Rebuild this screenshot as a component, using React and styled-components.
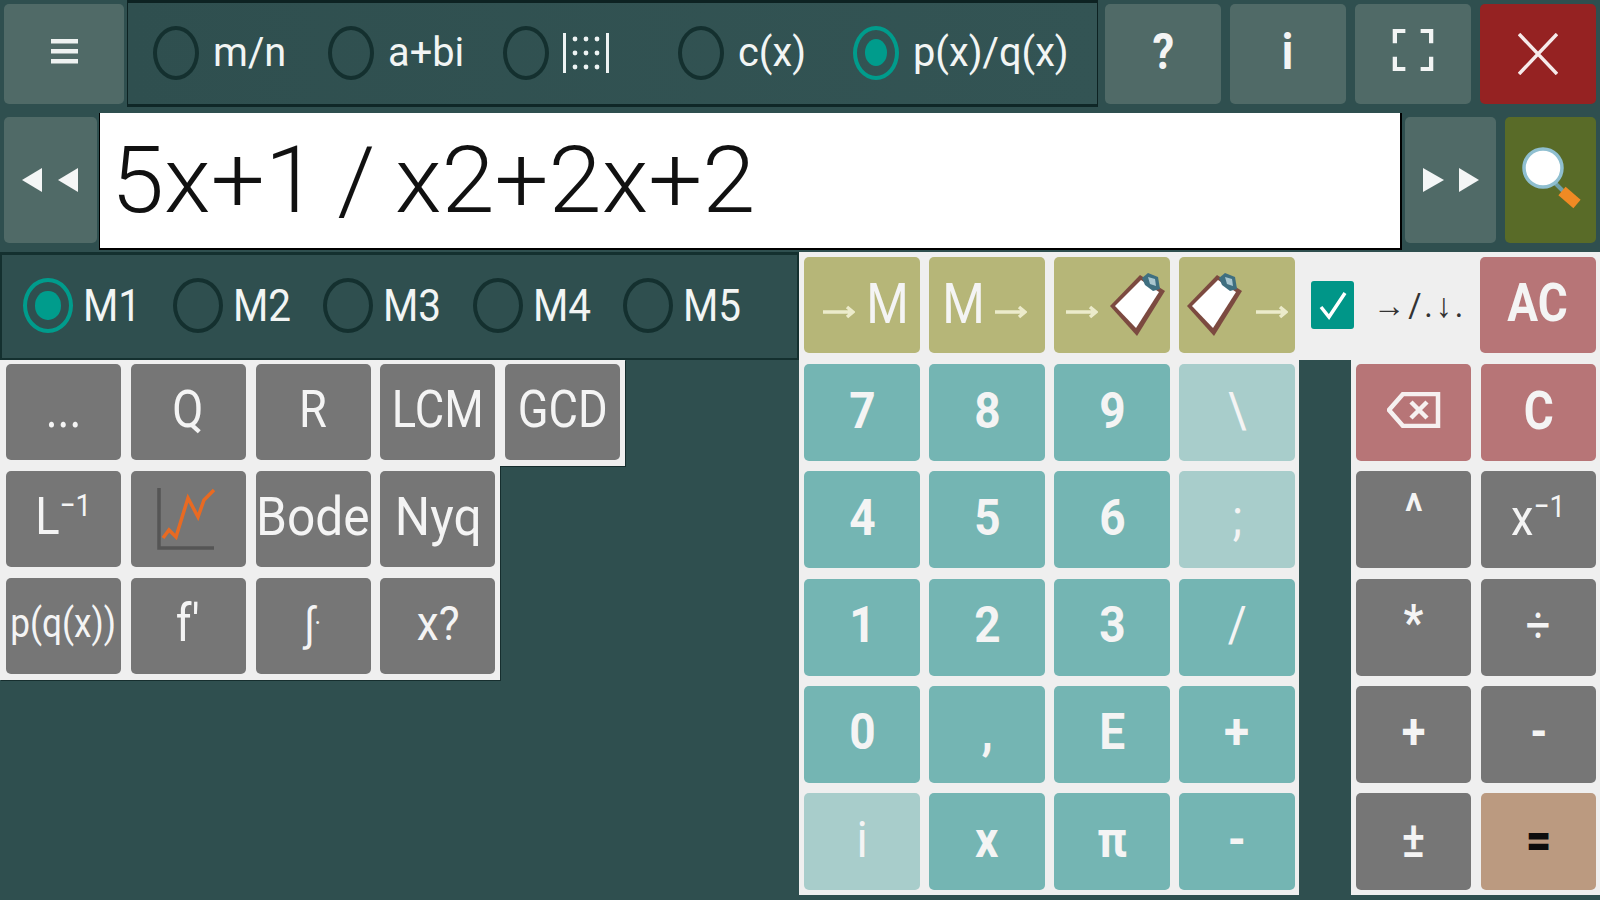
import React from "react";
import styled, { createGlobalStyle } from "styled-components";

const Global = createGlobalStyle`
  html, body { margin: 0; padding: 0; background: #2f4f4f; }
  * { box-sizing: border-box; }
`;

const tones = {
  nav: "#506a67",
  red: "#952222",
  olive: "#596b28",
  grey: "#767676",
  teal: "#74b5b3",
  pale: "#a8cdcb",
  khaki: "#b6b678",
  rose: "#b77577",
  tan: "#bb9a80",
};

const Screen = styled.div`
  width: 1600px;
  height: 900px;
  overflow: hidden;
  background: #2f4f4f;
  display: flex;
  flex-direction: column;
  font-family: Roboto, "Liberation Sans", sans-serif;
  color: #f4f4f4;
`;
const TopRow = styled.div`
  height: 107px;
  display: flex;
  padding: 0 4px;
`;
const MenuButton = styled.div`
  width: 120px;
  margin: 4px 0 3px;
  border-radius: 5px;
  background: ${tones.nav};
  display: flex;
  align-items: center;
  justify-content: center;
  padding-bottom: 6px;
`;
const ModePanel = styled.div`
  width: 971px;
  margin-left: 3px;
  border-top: 3px solid #0d2222;
  border-bottom: 3px solid #0f2727;
  border-left: 1px solid #0d2222;
  border-right: 1px solid #0d2222;
  background: linear-gradient(90deg, #2f4f4f, #335454);
  display: flex;
  align-items: center;
  padding: 0 0 2px 25px;
`;
const ActionGroup = styled.div`
  display: flex;
  gap: 9px;
  margin-left: 7px;
  padding: 4px 0 3px;
`;
const Key = styled.div`
  border-radius: 5px;
  background: ${(p) => tones[p.$tone] || tones.grey};
  display: flex;
  align-items: center;
  justify-content: center;
  gap: ${(p) => p.$gap || 0}px;
  overflow: hidden;
`;
const ActionKey = styled(Key)`
  width: 116px;
`;
const Label = styled.span`
  display: inline-block;
  white-space: nowrap;
  font-size: ${(p) => p.$size || 52}px;
  font-weight: ${(p) => p.$weight || 400};
  line-height: 1;
  color: ${(p) => p.$color || "#f4f4f4"};
  transform: translateY(${(p) => p.$up ?? -2}px) scaleX(${(p) => p.$sx || 0.87});
`;
const Sup = styled.sup`
  font-size: 0.62em;
  line-height: 0;
  vertical-align: 0.55em;
`;
const RadioItem = styled.div`
  display: flex;
  align-items: center;
  width: ${(p) => p.$w}px;
  gap: ${(p) => p.$gap}px;
`;
const Radio = styled.div`
  width: ${(p) => p.$w}px;
  height: ${(p) => p.$h}px;
  flex: none;
  border-radius: 50%;
  border: 4px solid ${(p) => (p.$on ? "#009c8c" : "#14302f")};
  display: flex;
  align-items: center;
  justify-content: center;
  &::after {
    content: "";
    display: ${(p) => (p.$on ? "block" : "none")};
    width: 60%;
    height: 60%;
    border-radius: 50%;
    background: #009c8c;
  }
`;
const RadioText = styled.span`
  display: inline-block;
  font-size: ${(p) => p.$size}px;
  line-height: 1;
  white-space: nowrap;
  transform-origin: left center;
  transform: scaleX(${(p) => p.$sx || 0.97});
  color: #f2f5f4;
`;
const InputRow = styled.div`
  height: 145px;
  padding: 6px 4px 0;
  display: flex;
  align-items: flex-start;
`;
const NavKey = styled(Key)`
  width: ${(p) => p.$w}px;
  height: 126px;
  margin: 4px 0 0 ${(p) => p.$ml || 0}px;
`;
const Expression = styled.div`
  width: 1304px;
  height: 137px;
  margin: 0 3px 0 2px;
  background: #fff;
  border-left: 1px solid #000;
  border-right: 2px solid #000;
  border-bottom: 2px solid #000;
  display: flex;
  align-items: center;
  padding-left: 11px;
  color: #111;
  font-size: 92px;
  font-weight: 300;
  line-height: 1;
  white-space: nowrap;
`;
const ExpressionText = styled.span`
  display: inline-block;
  transform-origin: left center;
  transform: scaleX(1.04);
`;
const Main = styled.div`
  flex: 1;
  display: flex;
  min-height: 0;
`;
const LeftColumn = styled.div`
  width: 800px;
  display: flex;
  flex-direction: column;
  align-items: flex-start;
`;
const MemoryBar = styled.div`
  width: 799px;
  height: 108px;
  padding: 0 0 2px 21px;
  border-top: 3px solid #14302f;
  border-bottom: 2px solid #14302f;
  border-left: 2px solid #14302f;
  border-right: 2px solid #14302f;
  display: flex;
  align-items: center;
`;
const FunctionPanel = styled.div`
  background: #efefef;
  display: grid;
  grid-template-columns: repeat(${(p) => p.$cols}, 115px);
  column-gap: 9.75px;
  row-gap: 11px;
  grid-auto-rows: 96px;
  padding: ${(p) => p.$pt}px 5px 6px 6px;
  box-shadow: 1px 1px 0 #162e2e;
`;
const RightColumn = styled.div`
  flex: 1;
  display: flex;
  flex-direction: column;
`;
const MemoryRow = styled.div`
  height: 108px;
  background: #efefef;
  padding: 5px 4px 7px 5px;
  display: flex;
  gap: 9px;
`;
const MemoryKey = styled(Key)`
  width: 116px;
  padding-left: ${(p) => p.$pl || 0}px;
  padding-right: ${(p) => p.$pr || 0}px;
`;
const ArrowToggle = styled.div`
  width: 168px;
  display: flex;
  align-items: center;
  padding-left: 7px;
  margin-right: -1px;
  gap: 19px;
`;
const CheckBox = styled.div`
  width: 43px;
  height: 48px;
  flex: none;
  border-radius: 3px;
  background: #009688;
  display: flex;
  align-items: center;
  justify-content: center;
`;
const ToggleText = styled.span`
  display: inline-block;
  font-size: 34px;
  line-height: 1;
  letter-spacing: 3px;
  color: #333;
  white-space: nowrap;
  transform-origin: left center;
  transform: scaleX(0.95);
`;
const AllClear = styled(Key)`
  width: 116px;
`;
const KeyArea = styled.div`
  display: flex;
  justify-content: space-between;
  height: 535px;
`;
const KeyPanel = styled.div`
  background: #efefef;
  display: grid;
  grid-template-columns: repeat(${(p) => p.$cols}, ${(p) => p.$w}px);
  column-gap: ${(p) => p.$gap}px;
  grid-auto-rows: 97px;
  row-gap: 10.25px;
  padding: 4px 4px 5px 5px;
`;
const Svg = styled.svg`
  display: block;
  flex: none;
`;

function Triangles({ right }) {
  return (
    <Svg width="56" height="24" viewBox="0 0 56 24" fill="#f4f6f6">
      {right ? (
        <>
          <path d="M0 0L21 12L0 24Z" />
          <path d="M36 0L56 12L36 24Z" />
        </>
      ) : (
        <>
          <path d="M20 0L0 12L20 24Z" />
          <path d="M56 0L36 12L56 24Z" />
        </>
      )}
    </Svg>
  );
}

function Arrow() {
  return (
    <Svg width="32" height="16" viewBox="0 0 32 16" fill="none" stroke="#ecebcb" strokeWidth="3.5" style={{ marginTop: 14 }}>
      <path d="M0 8H29M24 3L30 8L24 13" />
    </Svg>
  );
}

function Clipboard() {
  return (
    <Svg width="58" height="64" viewBox="0 0 58 64">
      <path d="M1 33L31 2L56 18L28 63Z" fill="#7c4a40" />
      <path d="M6 33L32 7L50 19L27 55Z" fill="#fff" />
      <path d="M33 5L39 0L49 4L51 16L44 18L36 12Z" fill="#3f6f80" />
      <path d="M39 4L46 6L47 13L41 11Z" fill="#a9c6cf" />
    </Svg>
  );
}

function RadioOption({ label, on, icon }) {
  return (
    <RadioItem $w={175} $gap={14}>
      <Radio $w={46} $h={54} $on={on} />
      {icon || <RadioText $size={41}>{label}</RadioText>}
    </RadioItem>
  );
}

function MemoryOption({ label, on }) {
  return (
    <RadioItem $w={150} $gap={10}>
      <Radio $w={50} $h={55} $on={on} />
      <RadioText $size={44} $sx={0.92}>{label}</RadioText>
    </RadioItem>
  );
}

const fnKeys = [
  { l: "..." },
  { l: "Q" },
  { l: "R" },
  { l: "LCM" },
  { l: "GCD" },
];

const digitRows = [
  ["7", "8", "9", "\\"],
  ["4", "5", "6", ";"],
  ["1", "2", "3", "/"],
  ["0", ",", "E", "+"],
  ["i", "x", "π", "-"],
];
const paleKeys = new Set(["\\", ";", "i"]);
const thinKeys = new Set(["\\", ";", "i", "/"]);

function L1({ base }) {
  return (
    <Label>
      {base}
      <Sup>−1</Sup>
    </Label>
  );
}

export default function App() {
  return (
    <Screen>
      <Global />
      <TopRow>
        <MenuButton>
          <Svg width="27" height="25" viewBox="0 0 27 25" fill="#eef2f1">
            <rect width="27" height="4.5" />
            <rect y="10" width="27" height="4.5" />
            <rect y="20" width="27" height="4.5" />
          </Svg>
        </MenuButton>
        <ModePanel>
          <RadioOption label="m/n" />
          <RadioOption label="a+bi" />
          <RadioOption
            icon={
              <Svg width="46" height="40" viewBox="0 0 46 40" fill="#eef3f3">
                <rect x="0" y="0" width="3" height="40" />
                <rect x="43" y="0" width="3" height="40" />
                {[6, 20, 34].map((y) =>
                  [12, 23, 34].map((x) => <circle key={x + "-" + y} cx={x} cy={y} r="2.4" />)
                )}
              </Svg>
            }
          />
          <RadioOption label="c(x)" />
          <RadioOption label="p(x)/q(x)" on />
        </ModePanel>
        <ActionGroup>
          <ActionKey $tone="nav"><Label $weight={700} $size={50}>?</Label></ActionKey>
          <ActionKey $tone="nav"><Label $weight={700} $size={50}>i</Label></ActionKey>
          <ActionKey $tone="nav">
            <Svg width="42" height="42" viewBox="0 0 42 44" fill="none" stroke="#f2f4f4" strokeWidth="4.5" style={{ marginTop: -9 }}>
              <path d="M2 15V2H13M29 2H40V15M40 29V42H29M13 42H2V29" />
            </Svg>
          </ActionKey>
          <ActionKey $tone="red">
            <Svg width="40" height="42" viewBox="0 0 40 42" fill="none" stroke="#f6eaea" strokeWidth="3.5">
              <path d="M1 1L39 41M39 1L1 41" />
            </Svg>
          </ActionKey>
        </ActionGroup>
      </TopRow>
      <InputRow>
        <NavKey $tone="nav" $w={93}><Triangles /></NavKey>
        <Expression><ExpressionText>5x+1{"\u2009"}/{"\u2009"}x2+2x+2</ExpressionText></Expression>
        <NavKey $tone="nav" $w={91}><Triangles right /></NavKey>
        <NavKey $tone="olive" $w={91} $ml={9}>
          <Svg width="72" height="78" viewBox="0 0 72 78" style={{ marginLeft: 4, marginTop: -4 }}>
            <path d="M37 43L46 52" stroke="#6f9fa8" strokeWidth="4" fill="none" />
            <path d="M45 52L60 65" stroke="#f08a24" strokeWidth="11" fill="none" />
            <circle cx="26" cy="29" r="19" fill="#fff" stroke="#8fbfd0" strokeWidth="3.5" />
          </Svg>
        </NavKey>
      </InputRow>
      <Main>
        <LeftColumn>
          <MemoryBar>
            <MemoryOption label="M1" on />
            <MemoryOption label="M2" />
            <MemoryOption label="M3" />
            <MemoryOption label="M4" />
            <MemoryOption label="M5" />
          </MemoryBar>
          <FunctionPanel $cols={5} $pt={4}>
            {fnKeys.map((k) => (
              <Key key={k.l}><Label>{k.l}</Label></Key>
            ))}
          </FunctionPanel>
          <FunctionPanel $cols={4} $pt={5}>
            <Key><L1 base="L" /></Key>
            <Key>
              <Svg width="66" height="70" viewBox="34 14 66 70" fill="none" strokeWidth="3.5">
                <path d="M38 18V78H93" stroke="#555" />
                <path d="M42 68L48 60L55 67L67 28L77 47L83 30L93 20" stroke="#e86a22" />
              </Svg>
            </Key>
            <Key><Label $size={54} $sx={0.92}>Bode</Label></Key>
            <Key><Label $size={54} $sx={0.92}>Nyq</Label></Key>
            <Key><Label $size={40} $sx={0.88}>p(q(x))</Label></Key>
            <Key><Label>f'</Label></Key>
            <Key><Label $size={46}>∫<Sup>.</Sup></Label></Key>
            <Key><Label $size={48} $sx={0.92}>x?</Label></Key>
          </FunctionPanel>
        </LeftColumn>
        <RightColumn>
          <MemoryRow>
            <MemoryKey $tone="khaki" $gap={8} $pl={11}><Arrow /><Label $size={56} $up={-1}>M</Label></MemoryKey>
            <MemoryKey $tone="khaki" $gap={8} $pr={8}><Label $size={56} $up={-1}>M</Label><Arrow /></MemoryKey>
            <MemoryKey $tone="khaki" $gap={11} $pl={8}><Arrow /><Clipboard /></MemoryKey>
            <MemoryKey $tone="khaki" $gap={12}><Clipboard /><Arrow /></MemoryKey>
            <ArrowToggle>
              <CheckBox>
                <Svg width="30" height="30" viewBox="0 0 30 30" fill="none" stroke="#fff" strokeWidth="3.5">
                  <path d="M3 17L11 27L27 3" />
                </Svg>
              </CheckBox>
              <ToggleText>→/.↓.</ToggleText>
            </ArrowToggle>
            <AllClear $tone="rose"><Label $weight={700} $size={54} $sx={0.85}>AC</Label></AllClear>
          </MemoryRow>
          <KeyArea>
            <KeyPanel $cols={4} $w={116} $gap={9}>
              {digitRows.flat().map((d) => (
                <Key key={d} $tone={paleKeys.has(d) ? "pale" : "teal"}>
                  <Label $weight={thinKeys.has(d) ? 400 : 700} $size={50} $sx={0.92}>{d}</Label>
                </Key>
              ))}
            </KeyPanel>
            <KeyPanel $cols={2} $w={115} $gap={10}>
              <Key $tone="rose">
                <Svg width="54" height="36" viewBox="0 0 54 36" fill="none" stroke="#f6f0f0" strokeWidth="4.5" style={{ marginTop: -6 }}>
                  <path d="M16 2H51V34H16L2 18Z" />
                  <path d="M24 10L40 26M40 10L24 26" />
                </Svg>
              </Key>
              <Key $tone="rose"><Label $weight={700} $size={54} $sx={0.85}>C</Label></Key>
              <Key><Label $weight={500} $size={50} $up={-8}>^</Label></Key>
              <Key><L1 base="x" /></Key>
              <Key><Label $weight={700} $size={50} $up={-4}>*</Label></Key>
              <Key><Label $size={50}>÷</Label></Key>
              <Key><Label $weight={700} $size={50}>+</Label></Key>
              <Key><Label $weight={700} $size={50}>-</Label></Key>
              <Key><Label $weight={500} $size={50}>±</Label></Key>
              <Key $tone="tan"><Label $weight={900} $size={50} $color="#0d0d0d">=</Label></Key>
            </KeyPanel>
          </KeyArea>
        </RightColumn>
      </Main>
    </Screen>
  );
}
